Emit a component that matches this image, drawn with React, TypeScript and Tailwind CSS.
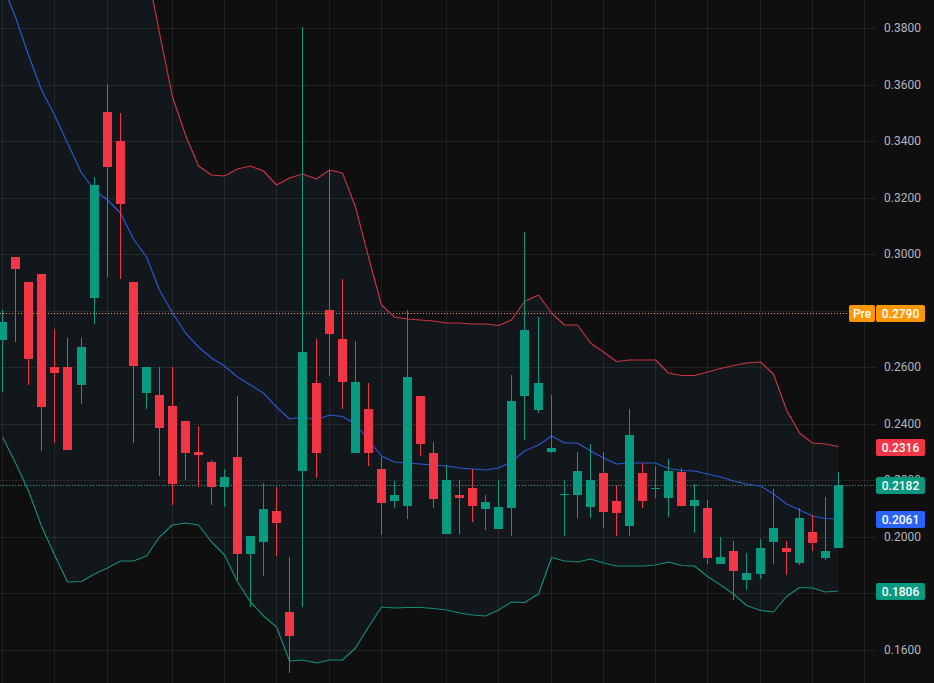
const RED = "#f23645";
const GREEN = "#089981";

// [wick top, body top, body bottom, wick bottom, up?]
const candles: [number, number, number, number, 0 | 1][] = [
  [310, 322, 340, 392, 1], [257, 257, 269, 342, 0], [282, 282, 359, 385, 0], [274, 274, 407, 451, 0],
  [329, 367, 373, 443, 0], [338, 367, 450, 450, 0], [338, 347, 385, 404, 1], [177, 185, 298, 324, 1],
  [84, 112, 167, 277, 0], [113, 141, 204, 279, 0], [282, 282, 366, 443, 0], [367, 367, 393, 409, 1],
  [367, 395, 428, 476, 0], [367, 406, 484, 505, 0], [421, 421, 453, 480, 0], [426, 452, 455, 487, 0],
  [460, 462, 487, 505, 0], [469, 477, 487, 507, 1], [396, 457, 554, 580, 0], [536, 536, 554, 607, 1],
  [483, 509, 542, 576, 1], [487, 511, 523, 556, 0], [557, 612, 636, 673, 0], [27, 352, 471, 607, 1],
  [339, 383, 453, 478, 0], [170, 310, 334, 376, 0], [279, 339, 382, 409, 0], [341, 382, 453, 453, 1],
  [383, 409, 453, 466, 0], [457, 469, 503, 535, 0], [481, 495, 501, 508, 1], [310, 377, 506, 519, 1],
  [396, 396, 444, 456, 0], [442, 453, 499, 508, 0], [465, 480, 534, 534, 1], [480, 495, 498, 534, 0],
  [469, 488, 506, 522, 0], [495, 502, 509, 530, 1], [480, 507, 529, 529, 1], [375, 401, 508, 536, 1],
  [232, 330, 396, 440, 1], [317, 383, 410, 413, 1], [395, 448, 452, 453, 1], [480, 494, 495, 536, 1],
  [452, 471, 495, 518, 1], [444, 480, 507, 518, 1], [452, 473, 512, 528, 0], [485, 501, 513, 536, 0],
  [409, 435, 526, 536, 1], [463, 473, 501, 508, 0], [466, 488, 489, 498, 1], [459, 471, 498, 517, 1],
  [468, 472, 506, 506, 0], [484, 500, 506, 533, 1], [500, 508, 558, 564, 0], [537, 557, 564, 564, 1],
  [541, 551, 571, 600, 0], [553, 573, 580, 590, 1], [539, 548, 574, 579, 1], [489, 528, 542, 564, 1],
  [541, 548, 552, 575, 0], [508, 518, 563, 565, 1], [515, 532, 543, 551, 0], [497, 551, 558, 560, 1],
  [472, 485, 548, 548, 1],
];

const left = (i: number) => 13 * i - 2 + (i >= 6 ? 1 : 0) + (i >= 24 ? 1 : 0) + (i >= 41 ? 1 : 0) + (i >= 58 ? 1 : 0);
const cx = (i: number) => left(i) + 4.5;

const upperY = [
  -400, -370, -340, -300, -260, -220, -180, -140, -110, -85, -60, -33, 33, 97, 135, 166, 175, 176, 169, 166, 171, 185, 178, 174,
  179, 170, 173, 207, 257, 305, 317, 319, 320, 321, 323, 323, 324, 324, 325.5, 320, 301.5, 295, 313, 325, 325, 343, 352,
  361.5, 360, 360, 360, 373, 375.5, 375.5, 372, 368.5, 365.5, 363, 362, 374, 410, 433, 443, 444, 446.5,
];
const lowerY = [
  437, 463, 491, 526, 555, 582, 581.5, 574, 568, 561, 561, 556, 537, 525, 523, 525, 542, 555, 582, 602, 616, 627, 661, 660,
  663, 660, 660, 648, 627, 607, 608, 607.5, 607.5, 608.5, 610, 613, 615, 616, 610, 602, 602.5, 594, 557.5, 561, 562, 559,
  563, 566, 566, 566, 565, 562, 565.5, 566, 576.5, 585, 594, 605.5, 610.5, 612, 596.5, 587.5, 588, 592, 591,
];
const basisY = [
  -15, 17, 55, 90, 115, 143, 173, 190, 200, 213, 239, 257, 290, 313, 333, 347, 358, 366, 377, 385, 393, 407, 419, 417,
  420, 415, 416.5, 424, 440, 456, 462, 463, 464, 465, 466, 468, 469, 470, 468, 462, 451, 445, 436, 443, 443, 451, 458, 464,
  463, 463, 463, 468.5, 470.5, 471, 474, 477, 481, 484, 486, 494, 504, 510, 516, 518.5, 519,
];

const line = (ys: number[]) => ys.map((y, i) => `${cx(i)},${y}`).join(" ");
const fill =
  `0,-500 ` + line(upperY) + ` ` + [...lowerY].map((y, i) => `${cx(i)},${y}`).reverse().join(" ") + ` 0,430`;

const verticals = [2.5, 54.5, 107.5, 172.5, 224.5, 276.5, 329.5, 381.5, 446.5, 498.5, 551.5, 603.5, 655.5, 707.5, 760.5, 812.5, 864.5];
// 0.2800 and 0.1800 lie wholly behind price badges in the picture, so their rows stay empty.
const ticks = ["0.3800", "0.3600", "0.3400", "0.3200", "0.3000", "", "0.2600", "0.2400", "0.2200", "0.2000", "", "0.1600"];

function Badge({ text, top, className }: { text: string; top: string; className: string }) {
  return (
    <div className={`absolute left-[876px] flex h-[17px] w-[49px] items-center justify-center rounded-[2px] text-[12px] font-medium text-white ${top} ${className}`}>
      {text}
    </div>
  );
}

export default function App() {
  return (
    <div className="relative flex h-[683px] w-[934px] overflow-hidden bg-[#0f0f0f] font-['Roboto',sans-serif]">
      <svg width="876" height="683" viewBox="0 0 876 683" className="block flex-none">
        <polygon points={fill} fill="#12171b" />
        <g stroke="#ffffff" strokeOpacity="0.075" strokeWidth="1" shapeRendering="crispEdges">
          {verticals.map((x) => (
            <line key={x} x1={x} x2={x} y1={0} y2={683} />
          ))}
          {ticks.map((_, i) => (
            <line key={i} x1={0} x2={876} y1={28 + Math.round(i * 56.5) + 0.5} y2={28 + Math.round(i * 56.5) + 0.5} />
          ))}
        </g>
        <line x1="0" x2="849" y1="313.5" y2="313.5" stroke="#ff9800" strokeDasharray="1 2" shapeRendering="crispEdges" />
        <line x1="0" x2="876" y1="485.5" y2="485.5" stroke="#0aa88e" strokeDasharray="1 2" shapeRendering="crispEdges" />
        <polyline points={line(upperY)} fill="none" stroke="#c93444" strokeWidth="1.15" strokeLinejoin="round" />
        <polyline points={line(lowerY)} fill="none" stroke="#148d78" strokeWidth="1.15" strokeLinejoin="round" />
        <polyline points={line(basisY)} fill="none" stroke="#2c58d2" strokeWidth="1.15" strokeLinejoin="round" />
        <g shapeRendering="crispEdges">
          {candles.map(([wt, bt, bb, wb, up], i) => {
            const c = up ? GREEN : RED;
            const x = left(i);
            return (
              <g key={i} fill={c}>
                <rect x={x + 4} y={wt} width={1} height={wb - wt} />
                <rect x={x} y={bt} width={9} height={Math.max(bb - bt, 1)} />
              </g>
            );
          })}
        </g>
      </svg>
      <div className="flex w-[58px] flex-none flex-col">
        {ticks.map((t, i) => (
          <div key={i} className="flex h-[56.5px] flex-none items-center pl-[8px] text-[12px] leading-none text-[#b2b5be]">
            {t}
          </div>
        ))}
      </div>
      <div className="absolute left-[849px] top-[305px] flex h-[17px] w-[26px] items-center justify-center rounded-[2px] bg-[#ff9800] text-[12px] font-medium text-white">
        Pre
      </div>
      <Badge text="0.2790" top="top-[305px]" className="bg-[#ff9800]" />
      <Badge text="0.2316" top="top-[439px]" className="bg-[#f23645]" />
      <Badge text="0.2182" top="top-[477px]" className="bg-[#089981]" />
      <Badge text="0.2061" top="top-[511px]" className="bg-[#2962ff]" />
      <Badge text="0.1806" top="top-[583px]" className="bg-[#089981]" />
    </div>
  );
}
